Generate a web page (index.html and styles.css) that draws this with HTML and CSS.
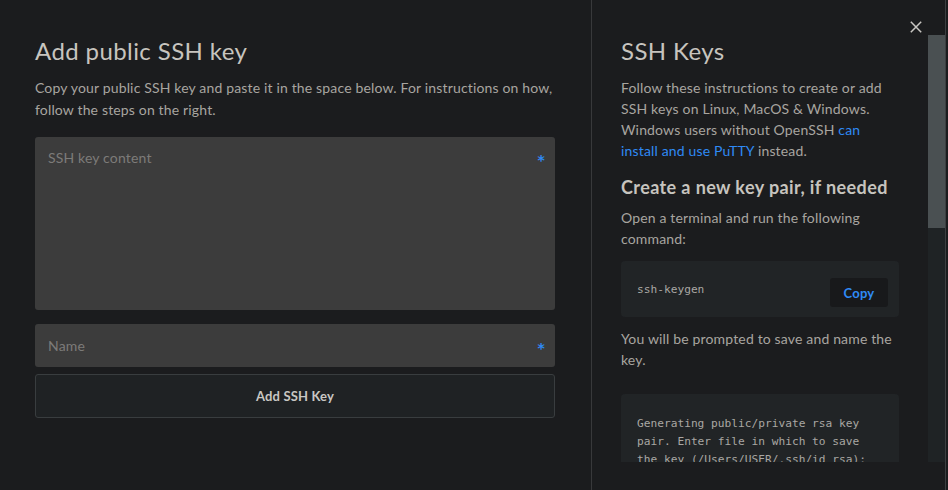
FILE: index.html
```html
<!DOCTYPE html>
<html lang="en">
<head>
<meta charset="utf-8">
<title>Add public SSH key</title>
<link rel="stylesheet" href="styles.css">
</head>
<body>
<div class="modal">
  <section class="form-pane">
    <h1 class="title">Add public SSH key</h1>
    <p class="lead">Copy your public SSH key and paste it in the space below. For instructions on how, follow the steps on the right.</p>
    <div class="field field-area">
      <span class="placeholder">SSH key content</span>
      <span class="req">*</span>
    </div>
    <div class="field field-input">
      <span class="placeholder">Name</span>
      <span class="req">*</span>
    </div>
    <button class="submit">Add SSH Key</button>
  </section>
  <aside class="help-pane">
    <button class="close" aria-label="Close">
      <svg width="12" height="12" viewBox="0 0 12 12"><path d="M0.8 0.8 L11.2 11.2 M11.2 0.8 L0.8 11.2" stroke="#c9c7c3" stroke-width="1.5" fill="none"/></svg>
    </button>
    <div class="scroll-wrap">
      <div class="scroll-content">
        <h2 class="title">SSH Keys</h2>
        <p class="body">Follow these instructions to create or add SSH keys on Linux, MacOS &amp; Windows. Windows users without OpenSSH <a href="#">can install and use PuTTY</a> instead.</p>
        <h3 class="sub">Create a new key pair, if needed</h3>
        <p class="body">Open a terminal and run the following command:</p>
        <div class="cmd">
          <code>ssh-keygen</code>
          <button class="copy">Copy</button>
        </div>
        <p class="body">You will be prompted to save and name the key.</p>
        <pre class="out">Generating public/private rsa key
pair. Enter file in which to save
the key (/Users/USER/.ssh/id_rsa):</pre>
      </div>
      <div class="scrollbar"><div class="thumb"></div></div>
    </div>
  </aside>
</div>
</body>
</html>
```

FILE: styles.css
```css
* { box-sizing: border-box; }
html, body {
  margin: 0;
  height: 100%;
  background: #1b1c1e;
}
body {
  font-family: Lato, "Open Sans", sans-serif;
  color: #a8a5a0;
  overflow: hidden;
}
.modal {
  display: flex;
  width: 946px;
  height: 490px;
}
.form-pane {
  width: 591px;
  flex: none;
  padding: 36px 36px 0 35px;
}
.title {
  margin: 0;
  font-size: 24px;
  line-height: 30px;
  font-weight: 400;
  letter-spacing: 0.4px;
  color: #c7c4bf;
}
.lead {
  margin: 10.5px 0 0;
  font-size: 14px;
  line-height: 22px;
  letter-spacing: 0.16px;
}
.field {
  display: flex;
  justify-content: space-between;
  align-items: flex-start;
  background: #3c3c3c;
  border-radius: 3px;
  padding: 11px 10px 0 13px;
  font-size: 14px;
  line-height: 20px;
  letter-spacing: 0.16px;
}
.field-area {
  margin-top: 16.5px;
  height: 173px;
}
.field-input {
  margin-top: 14px;
  height: 43px;
  padding-top: 12px;
}
.placeholder { color: #7c7b79; }
.req {
  font-family: "DejaVu Sans", sans-serif;
  color: #2f8af5;
  font-weight: 700;
  font-size: 14px;
  line-height: 20px;
  padding-top: 2px;
}
.submit {
  display: block;
  width: 100%;
  height: 44px;
  margin-top: 7px;
  background: #1f2224;
  border: 1px solid #393d3f;
  border-radius: 3px;
  font-family: inherit;
  font-weight: 700;
  font-size: 13px;
  letter-spacing: 0.15px;
  color: #c9c7c3;
  padding: 0;
}
.help-pane {
  position: relative;
  flex: 1;
  border-left: 1px solid #38393b;
  border-right: 1px solid #3c3f41;
  padding-top: 35px;
  padding-bottom: 28px;
  display: flex;
  flex-direction: column;
}
.close {
  position: absolute;
  top: 21px;
  right: 23px;
  width: 12px;
  height: 12px;
  padding: 0;
  border: 0;
  background: none;
  display: block;
}
.close svg { display: block; }
.scroll-wrap {
  flex: 1;
  display: flex;
  min-height: 0;
}
.scroll-content {
  flex: 1;
  overflow: hidden;
  padding: 1px 29px 0 29px;
}
.scrollbar {
  width: 17px;
  flex: none;
  background: #1f2325;
}
.thumb {
  height: 193px;
  background: #4a5052;
}
.body {
  margin: 0;
  font-size: 14px;
  line-height: 21px;
  letter-spacing: 0.16px;
}
.scroll-content .title + .body { margin-top: 10.5px; }
.body a {
  color: #2f8af5;
  text-decoration: none;
}
.sub {
  margin: 14px 0 0;
  font-size: 18px;
  line-height: 24px;
  font-weight: 700;
  letter-spacing: 0.4px;
  color: #c7c4bf;
}
.sub + .body { margin-top: 8px; }
.cmd {
  display: flex;
  align-items: center;
  justify-content: space-between;
  height: 56px;
  margin-top: 12.5px;
  padding: 0 11px 0 16px;
  background: #212426;
  border-radius: 4px;
}
.cmd code, .out {
  font-family: "DejaVu Sans Mono", "Liberation Mono", monospace;
  font-size: 11.2px;
  color: #a9a7a3;
}
.copy {
  margin-top: 7px;
  width: 58px;
  height: 29px;
  background: #18191b;
  border: 0;
  border-radius: 3px;
  font-family: inherit;
  font-weight: 700;
  font-size: 13px;
  letter-spacing: 0.2px;
  color: #2f8af5;
  padding: 0;
}
.cmd + .body { margin-top: 10.5px; }
.out {
  margin: 24px 0 0;
  padding: 21px 16px 16px;
  background: #212426;
  border-radius: 4px;
  line-height: 18px;
  white-space: pre;
}
```
